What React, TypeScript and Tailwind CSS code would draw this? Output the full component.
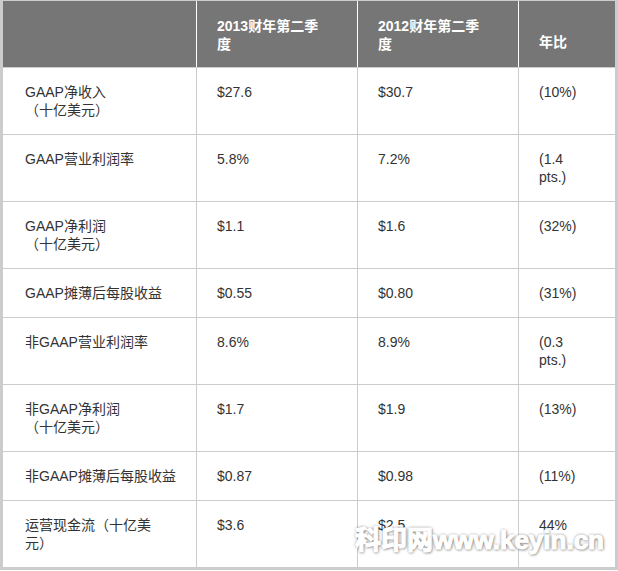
import React from "react"

type Row = { label: React.ReactNode; a: string; b: string; c: React.ReactNode; tall: boolean }

const rows: Row[] = [
  { label: <>GAAP净收入<br />（十亿美元）</>, a: "$27.6", b: "$30.7", c: "(10%)", tall: true },
  { label: "GAAP营业利润率", a: "5.8%", b: "7.2%", c: <>(1.4<br />pts.)</>, tall: true },
  { label: <>GAAP净利润<br />（十亿美元）</>, a: "$1.1", b: "$1.6", c: "(32%)", tall: true },
  { label: "GAAP摊薄后每股收益", a: "$0.55", b: "$0.80", c: "(31%)", tall: false },
  { label: "非GAAP营业利润率", a: "8.6%", b: "8.9%", c: <>(0.3<br />pts.)</>, tall: true },
  { label: <>非GAAP净利润<br />（十亿美元）</>, a: "$1.7", b: "$1.9", c: "(13%)", tall: true },
  { label: "非GAAP摊薄后每股收益", a: "$0.87", b: "$0.98", c: "(11%)", tall: false },
  { label: <>运营现金流（十亿美<br />元）</>, a: "$3.6", b: "$2.5", c: "44%", tall: true },
]

export default function App() {
  return (
    <div className="relative w-[618px] h-[571px] bg-white font-['Liberation_Sans','Noto_Sans_CJK_SC',sans-serif] text-[14px] leading-[18px] text-[#333]">
      <div className="w-[618px] border-x-[3px] border-b-[3px] border-t border-[#cccccc]">
        {/* Header */}
        <div className="grid grid-cols-[193px_161px_161px_97px] h-[66px] bg-[#767676] text-white font-bold">
          <div />
          <div className="border-l border-white flex items-end pl-5 pb-[14px]">2013财年第二季<br />度</div>
          <div className="border-l border-white flex items-end pl-5 pb-[14px]">2012财年第二季<br />度</div>
          <div className="border-l border-white flex items-end pl-5 pb-4">年比</div>
        </div>

        {/* Body */}
        {rows.map((r, i) => (
          <div key={i} className={`grid grid-cols-[193px_161px_161px_97px] border-t border-[#cccccc] ${r.tall ? "h-[67px]" : "h-[49px]"}`}>
            <div className="pl-[22px] pt-[15px]">{r.label}</div>
            <div className="border-l border-[#cccccc] pl-5 pt-[15px]">{r.a}</div>
            <div className="border-l border-[#cccccc] pl-5 pt-[15px]">{r.b}</div>
            <div className="border-l border-[#cccccc] pl-5 pt-[15px]">{r.c}</div>
          </div>
        ))}
      </div>

      {/* Watermark */}
      <div className="absolute left-[355px] top-[522px] text-[26px] leading-[36px] font-bold text-white whitespace-nowrap [-webkit-text-stroke:1.2px_white] [text-shadow:0_0_3px_rgba(0,0,0,0.6),1px_1px_3px_rgba(0,0,0,0.4)]">
        科印网www.keyin.cn
      </div>
    </div>
  )
}
